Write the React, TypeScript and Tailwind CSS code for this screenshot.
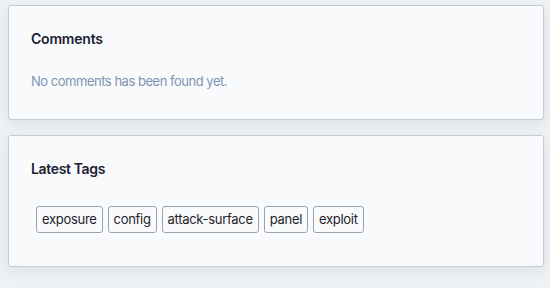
export default function App() {
  const tags = ["exposure", "config", "attack-surface", "panel", "exploit"];
  return (
    <div className="w-[550px] h-[288px] bg-[#eef1f5] pt-[5px] pl-[8px] pr-[6px]" style={{ fontFamily: "Inter, 'Liberation Sans', sans-serif" }}>
      <div className="flex flex-col gap-[15px]">
        <div className="h-[115px] bg-[#f8fafc] border border-[#c3cbd6] rounded-[3px] shadow-[0_4px_14px_rgba(100,116,139,0.12)] pl-[22px] pt-[23px]">
          <div className="text-[14px] leading-[20px] font-semibold tracking-[-0.2px] text-[#1c2033]">Comments</div>
          <div className="mt-[22px] text-[13px] leading-[20px] tracking-[-0.48px] text-[#7f95b2]">No comments has been found yet.</div>
        </div>
        <div className="h-[132px] bg-[#f8fafc] border border-[#c3cbd6] rounded-[3px] shadow-[0_4px_14px_rgba(100,116,139,0.12)] pl-[22px] pt-[23px]">
          <div className="text-[14px] leading-[20px] font-semibold tracking-[-0.35px] text-[#1c2033]">Latest Tags</div>
          <div className="mt-[27px] ml-[5px] flex gap-[5px]">
            {tags.map((t) => (
              <span key={t} className="h-[27px] px-[5px] flex items-center border border-[#9aa3ad] rounded-[3px] text-[13px] tracking-[-0.3px] text-[#1f2328]">
                {t}
              </span>
            ))}
          </div>
        </div>
      </div>
    </div>
  );
}
